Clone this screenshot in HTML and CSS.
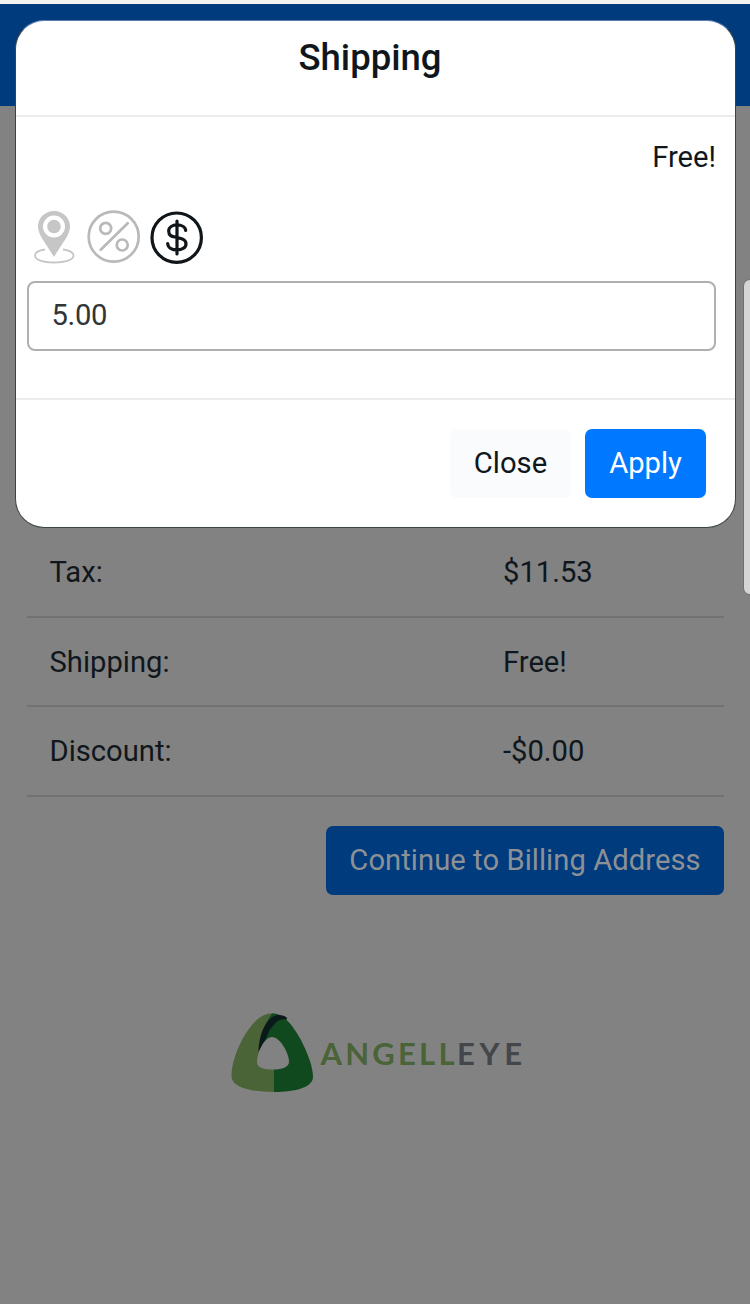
FILE: index.html
```html
<!DOCTYPE html>
<html lang="en">
<head>
<meta charset="utf-8">
<title>Shipping</title>
<link rel="stylesheet" href="styles.css">
</head>
<body>
<div class="screen">
  <div class="status-strip"></div>
  <header class="navbar"></header>
  <main class="content">
    <dl class="totals">
      <div class="row"><dt>Tax:</dt><dd>$11.53</dd></div>
      <div class="row"><dt>Shipping:</dt><dd>Free!</dd></div>
      <div class="row"><dt>Discount:</dt><dd>-$0.00</dd></div>
    </dl>
    <button class="btn continue">Continue to Billing Address</button>
    <svg class="logo" width="300" height="90" viewBox="0 0 300 90">
      <path fill="#4a6337" d="M47 4.500C36 4 26 15 18 29C11 42 6.500 56 6.500 67C6.500 78 25 83 49 83V60L55 6C52 5 50 4.500 47 4.500Z"/>
      <path fill="#11491f" d="M47 4.500C59 4 68 17 76 31C83 45 88 58 88 68C88 78 71 83 49 83V60L35 42C35 25 42 12 47 4.500Z"/>
      <path fill="#0a1a1b" d="M33.500 43C34 22 43 7 53 6C58 6 63 8 62 10.500C54 9 50 14 48 17C44 20 43 26 41 29C39 35 36 38 33.500 43Z"/>
      <path fill="#828282" d="M47 28C55 28 64 44 64 53C64 58 57 60.500 48 60.500C39 60.500 32 59 32 53C32 44 39 28 47 28Z"/>
      <g class="wordmark">
        <text x="95.500" y="56" fill="#4a6337" textLength="134" lengthAdjust="spacing">ANGELL</text>
        <text x="232" y="56" fill="#43464a" textLength="65" lengthAdjust="spacing">EYE</text>
      </g>
    </svg>
  </main>
  <div class="scrollbar"></div>
  <section class="modal">
    <header class="modal-header"><h1>Shipping</h1></header>
    <div class="modal-body">
      <p class="amount">Free!</p>
      <div class="modes">
        <svg width="180" height="60" viewBox="0 0 180 60" fill="none">
          <g stroke="#c6c6c6">
            <path fill="#c6c6c6" stroke="none" fill-rule="evenodd" d="M26 3C17 3 10 10 10 18.500C10 27 17 34 26 49C35 34 42 27 42 18.500C42 10 35 3 26 3ZM26 7.500A11 11 0 1 1 26 29.500A11 11 0 0 1 26 7.500Z"/>
            <circle cx="26" cy="18.500" r="6.800" fill="#c6c6c6" stroke="none"/>
            <path stroke-width="1.800" d="M17 41.500C10 42.500 7 44.500 7 47.500C7 52 15 54.500 26 54.500S45.500 52 45.500 47.500C45.500 44.500 42 42.500 35 41.500"/>
          </g>
          <g stroke="#b9b9b9" stroke-width="2.700" stroke-linecap="round">
            <circle cx="85.700" cy="28.700" r="25"/>
            <circle cx="77.700" cy="20.400" r="5.500"/>
            <circle cx="94.200" cy="37" r="5.500"/>
            <path d="M99.700 15.200L72.700 41.700"/>
          </g>
          <g stroke="#101519" stroke-width="3.200" stroke-linecap="round">
            <circle cx="148.700" cy="29.700" r="24.700"/>
            <path d="M149 13V46M157.700 22.500C157 15 140.700 15 140.700 23C140.700 29 145.500 28.500 149 29.500C153.500 30.500 158 31.500 158 36C158 44 140 44 139.700 35.500"/>
          </g>
        </svg>
      </div>
      <input class="field" type="text" value="5.00">
    </div>
    <footer class="modal-footer">
      <button class="btn close">Close</button>
      <button class="btn apply">Apply</button>
    </footer>
  </section>
</div>
</body>
</html>
```
FILE: styles.css
```css
* { box-sizing: border-box; }
body {
  margin: 0;
  background: #828282;
  font-family: Roboto, "Liberation Sans", sans-serif;
  font-size: 29.2px;
  color: #10171c;
}
.screen {
  position: relative;
  width: 750px;
  height: 1304px;
  overflow: hidden;
}
.status-strip { height: 4px; background: #f2f4ef; }
.navbar { height: 102px; background: #003b7e; }
.content {
  display: flex;
  flex-direction: column;
  padding: 422px 26px 0 27px;
}
.totals { margin: 0; }
.row {
  display: grid;
  grid-template-columns: 453.5px 1fr;
  height: 89.5px;
  padding: 0 22.5px;
  border-bottom: 2px solid #727272;
  align-items: center;
}
.row dt, .row dd { margin: 0; line-height: 88px; }
.btn {
  height: 69px;
  padding: 0 0 1px;
  border: 0;
  border-radius: 7px;
  font: inherit;
}
.continue {
  align-self: flex-end;
  width: 398px;
  margin-top: 29.5px;
  background: #003b7e;
  color: #8d9196;
  letter-spacing: 0.05px;
}
.logo { margin: 114px 0 0 198px; }
.wordmark {
  font-family: Lato, sans-serif;
  font-size: 31px;
  font-weight: 700;
}
.scrollbar {
  position: absolute;
  top: 279px;
  right: -8px;
  width: 15px;
  height: 316px;
  border: 1px solid #707070;
  border-radius: 7px;
  background: #d5d5d5;
}
.modal {
  position: absolute;
  top: 20px;
  left: 15px;
  width: 721px;
  height: 508px;
  display: flex;
  flex-direction: column;
  border: 1px solid #3c4443;
  border-top-color: #5a7eae;
  border-radius: 29px;
  background: #fff;
}
.modal-header {
  height: 96px;
  padding-top: 15px;
  border-bottom: 2px solid #ececec;
  text-align: center;
}
.modal-header h1 {
  margin: 0 11px 0 0;
  font-size: 36.5px;
  font-weight: 500;
  line-height: 44px;
}
.modal-body {
  height: 281px;
  padding: 20px 19px 0 11px;
}
.amount { margin: 0; text-align: right; line-height: 40px; }
.modes { height: 60px; margin-top: 31px; padding-left: 1px; }
.modes svg { display: block; }
.field {
  display: block;
  width: 689px;
  height: 70px;
  margin-top: 13px;
  padding: 0 22.5px 2px;
  border: 2px solid #b0b0b0;
  border-radius: 8px;
  background: #fff;
  color: #303538;
  font: inherit;
  letter-spacing: -0.3px;
}
.modal-footer {
  display: flex;
  flex: 1;
  justify-content: flex-end;
  gap: 14px;
  padding: 29px 29px 0 0;
  border-top: 2px solid #ececec;
}
.close { width: 121px; background: #fafbfc; color: #10171c; }
.apply { width: 121px; background: #0078ff; color: #fff; }
```
